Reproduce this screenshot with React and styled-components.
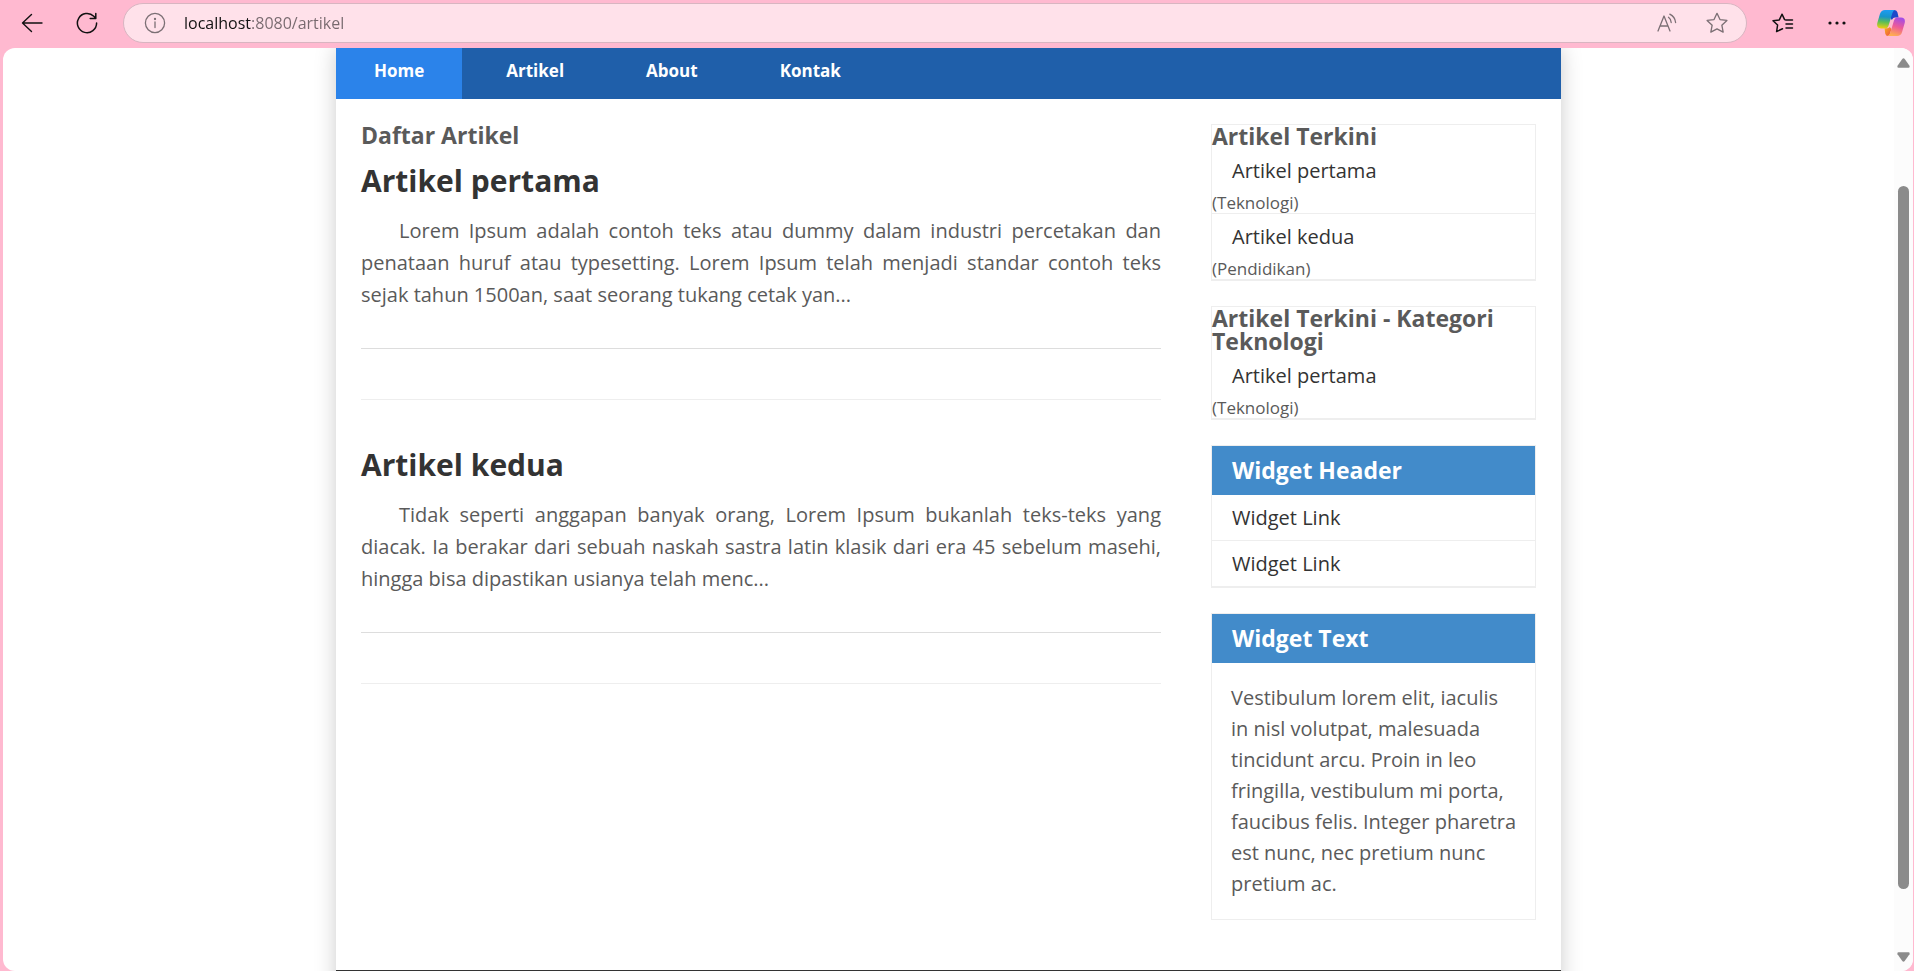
import React from "react";
import styled, { createGlobalStyle } from "styled-components";

const GlobalStyle = createGlobalStyle`
  *, *::before, *::after { box-sizing: border-box; }
  body {
    margin: 0;
    background: #ffb9d0;
    color: #5a5a5a;
    font-family: "Open Sans", sans-serif;
    font-size: 20px;
    line-height: 20px;
    overflow: hidden;
  }
  h1, h2, h3, p, ul { margin: 0; padding: 0; }
  ul { list-style: none; }
  a { color: #333; text-decoration: none; }
`;

const Browser = styled.div`
  display: flex;
  flex-direction: column;
  height: 100vh;
`;

const Toolbar = styled.div`
  flex: none;
  display: flex;
  align-items: center;
  height: 48px;
  padding: 0 7px 2px 16px;
  gap: 20px;
`;

const ToolButton = styled.button`
  display: flex;
  align-items: center;
  justify-content: center;
  width: ${(p) => p.$size || 32}px;
  height: 32px;
  padding: 0;
  border: 0;
  background: none;
  color: ${(p) => (p.$muted ? "#7b6f74" : "#111")};
`;

const AddressBar = styled.div`
  flex: 1;
  display: flex;
  align-items: center;
  gap: 13px;
  height: 40px;
  padding: 0 13px 0 15px;
  border: 1px solid #d8b5c1;
  border-radius: 20px;
  background: #ffe1ea;
`;

const AddressInput = styled.input`
  flex: 1;
  min-width: 0;
  padding: 0;
  border: 0;
  outline: 0;
  font: 16px/24px "Open Sans", sans-serif;
  color: transparent;
  background: linear-gradient(to right, #111 68px, #77696e 68px);
  background-clip: text;
  -webkit-background-clip: text;
`;

const ToolGroup = styled.div`
  display: flex;
  align-items: center;
  gap: ${(p) => p.$gap}px;
`;

const Viewport = styled.div`
  flex: 1;
  min-height: 0;
  display: flex;
  margin: 0 1px 0 3px;
  border-radius: 12px;
  background: #fff;
  overflow: hidden;
`;

const Page = styled.div`
  flex: 1;
  min-width: 0;
  overflow: hidden;
`;

const Container = styled.div`
  max-width: 1225px;
  margin: 0 auto;
  background: #fff;
  box-shadow: 0 0 20px #ccc;
`;

const Nav = styled.nav`
  display: flex;
  gap: 6px;
  background: #1f5faa;
`;

const NavLink = styled.a`
  padding: 8px 38px 13px;
  color: #fff;
  font-size: 17px;
  font-weight: 700;
  line-height: 30px;
  background: ${(p) => (p.$active ? "#2b83ea" : "transparent")};
`;

const Columns = styled.div`
  display: flex;
  align-items: flex-start;
  gap: 50px;
  padding: 25px;
`;

const Main = styled.main`
  flex: 1;
  min-width: 0;
`;

const Sidebar = styled.aside`
  flex: none;
  width: 325px;
`;

const SectionTitle = styled.h3`
  font-size: 23px;
  line-height: 23px;
`;

const Article = styled.article`
  padding: 19px 0 50px;
  border-bottom: 1px solid #eee;
  & + & { padding-top: 50px; }
`;

const ArticleTitle = styled.h2`
  color: #333;
  font-size: 30px;
  line-height: 30px;
`;

const ArticleText = styled.p`
  margin-top: 19px;
  padding-bottom: 37px;
  border-bottom: 1px solid #ddd;
  line-height: 32px;
  text-align: justify;
  text-indent: 38px;
`;

const Widget = styled.section`
  margin-bottom: 25px;
  border: 1px solid #eee;
`;

const WidgetHeader = styled(SectionTitle)`
  padding: 13px 20px;
  color: #fff;
  background: #428bca;
`;

const WidgetItem = styled.li`
  border-bottom: 1px solid #eee;
`;

const WidgetLink = styled.a`
  display: block;
  padding: 13px 20px 12px;
`;

const Category = styled.span`
  display: block;
  font-size: 17px;
`;

const WidgetText = styled.p`
  padding: 19px 16px 20px 19px;
  line-height: 31px;
`;

const Footer = styled.footer`
  height: 50px;
  background: #333;
`;

const Scrollbar = styled.div`
  flex: none;
  display: flex;
  flex-direction: column;
  align-items: center;
  width: 19px;
  padding: 10px 0 9px;
  background: #fcfcfc;
`;

const Thumb = styled.div`
  flex: 703;
  width: 11px;
  border-radius: 6px;
  background: #8b8b8b;
`;

const TrackSpace = styled.div`
  flex: ${(p) => p.$grow};
`;

const STAR = "M10 1.2 L12.7 6.9 L19 7.7 L14.4 12 L15.6 18.3 L10 15.3 L4.4 18.3 L5.6 12 L1 7.7 L7.3 6.9 Z";

const stroke = { fill: "none", stroke: "currentColor", strokeLinecap: "round", strokeLinejoin: "round" };

const BackIcon = () => (
  <svg width="22" height="20" viewBox="0 0 22 20" {...stroke} strokeWidth="1.4">
    <path d="M10.5 1.5 L1.5 10 L10.5 18.5 M1.5 10 H21" />
  </svg>
);

const ReloadIcon = () => (
  <svg width="22" height="22" viewBox="0 0 22 22" {...stroke} strokeWidth="1.5">
    <path d="M20.6 11 A9.6 9.6 0 1 1 17.8 4.3 L19.6 6.1 M19.8 1.4 V6.4 H14.2" />
  </svg>
);

const InfoIcon = () => (
  <svg width="22" height="22" viewBox="0 0 22 22" {...stroke} strokeWidth="1.3">
    <circle cx="11" cy="11" r="9.6" />
    <path d="M11 10 V15.5" />
    <circle cx="11" cy="7" r=".5" fill="currentColor" />
  </svg>
);

const ReadAloudIcon = () => (
  <svg width="22" height="20" viewBox="0 0 22 20" {...stroke} strokeWidth="1.3">
    <path d="M2 18 L8 3 L14 18 M4.2 13 H11.8 M12.5 4.3 Q15 6 15.2 9.5 M13.8 1.2 Q19 3.8 19.6 9.5" />
  </svg>
);

const StarIcon = () => (
  <svg width="22" height="22" viewBox="0 0 20 20" {...stroke} strokeWidth="1.2">
    <path d={STAR} />
  </svg>
);

const FavoritesIcon = () => (
  <svg width="22" height="20" viewBox="0 0 22 20" {...stroke} strokeWidth="1.5">
    <path d="M20.5 7 H14 L12.6 6.6 L10 1.2 L7.3 6.9 L1 7.7 L5.6 12 L4.6 18.6 L10.5 15.8 M14 11 H20.5 M14 15 H20.5" />
  </svg>
);

const MoreIcon = () => (
  <svg width="20" height="6" viewBox="0 0 20 6" fill="currentColor">
    <circle cx="3" cy="3" r="1.6" />
    <circle cx="10" cy="3" r="1.6" />
    <circle cx="17" cy="3" r="1.6" />
  </svg>
);

const CopilotIcon = () => (
  <svg width="28" height="26" viewBox="0 0 28 26">
    <defs>
      <linearGradient id="cpLeft" x1="0.3" y1="0" x2="0.2" y2="1">
        <stop offset="0" stopColor="#1c9bf0" />
        <stop offset="0.35" stopColor="#1794c9" />
        <stop offset="0.65" stopColor="#5fbf53" />
        <stop offset="1" stopColor="#f3cf0c" />
      </linearGradient>
      <linearGradient id="cpRight" x1="0.7" y1="0" x2="0.4" y2="1">
        <stop offset="0" stopColor="#a14be8" />
        <stop offset="0.5" stopColor="#ee5a98" />
        <stop offset="1" stopColor="#ffae50" />
      </linearGradient>
      <linearGradient id="cpBottom" x1="0" y1="0" x2="1" y2="1">
        <stop offset="0" stopColor="#f7b21b" />
        <stop offset="1" stopColor="#ee4b46" />
      </linearGradient>
    </defs>
    <path d="M13 0 H17.5 Q19.8 0 20.5 2.5 L21.6 7.5 H18 Q16 7.5 15.2 9.5 L13.8 9.5 Z" fill="#1b48c9" />
    <path d="M7.6 18.2 H11 Q12 18 12.8 17 L14.4 19 L13.2 23 Q12.4 26 11 26 Q8.8 26 8.2 23.5 Z" fill="url(#cpBottom)" />
    <path d="M8 0 H18 Q16.2 .6 15.4 3 L11.6 15.4 Q10.8 18.4 8 18.4 H4 Q-.8 18.4 .3 13 L3 3.8 Q4.2 0 8 0 Z" fill="url(#cpLeft)" />
    <path d="M20 26 H10.5 Q12.4 25.4 13.2 23 L17 10.6 Q18 7.6 20.5 7.6 H24 Q28.8 7.6 27.7 13 L25 22.2 Q23.8 26 20 26 Z" fill="url(#cpRight)" />
  </svg>
);

const ArrowUp = () => (
  <svg width="13" height="10" viewBox="0 0 13 10" fill="#8b8b8b">
    <path d="M5.3 1 Q6.5 -.4 7.7 1 L12.5 7.8 Q13 9.8 11.5 9.8 H1.5 Q0 9.8 .5 7.8 Z" />
  </svg>
);

const ArrowDown = () => (
  <svg width="13" height="10" viewBox="0 0 13 10" fill="#8b8b8b">
    <path d="M5.3 9 Q6.5 10.4 7.7 9 L12.5 2.2 Q13 .2 11.5 .2 H1.5 Q0 .2 .5 2.2 Z" />
  </svg>
);

const NAV = ["Home", "Artikel", "About", "Kontak"];

const ARTICLES = [
  {
    title: "Artikel pertama",
    text: "Lorem Ipsum adalah contoh teks atau dummy dalam industri percetakan dan penataan huruf atau typesetting. Lorem Ipsum telah menjadi standar contoh teks sejak tahun 1500an, saat seorang tukang cetak yan...",
  },
  {
    title: "Artikel kedua",
    text: "Tidak seperti anggapan banyak orang, Lorem Ipsum bukanlah teks-teks yang diacak. Ia berakar dari sebuah naskah sastra latin klasik dari era 45 sebelum masehi, hingga bisa dipastikan usianya telah menc...",
  },
];

const RECENT = [
  {
    title: "Artikel Terkini",
    items: [
      ["Artikel pertama", "Teknologi"],
      ["Artikel kedua", "Pendidikan"],
    ],
  },
  {
    title: "Artikel Terkini - Kategori Teknologi",
    items: [["Artikel pertama", "Teknologi"]],
  },
];

export default function App() {
  return (
    <Browser>
      <GlobalStyle />
      <Toolbar>
        <ToolGroup $gap={23}>
          <ToolButton aria-label="Back"><BackIcon /></ToolButton>
          <ToolButton aria-label="Reload"><ReloadIcon /></ToolButton>
        </ToolGroup>
        <AddressBar>
          <ToolButton aria-label="Site information" $muted><InfoIcon /></ToolButton>
          <AddressInput aria-label="Address" defaultValue="localhost:8080/artikel" />
          <ToolGroup $gap={20}>
            <ToolButton aria-label="Read aloud" $size={28} $muted><ReadAloudIcon /></ToolButton>
            <ToolButton aria-label="Add to favorites" $muted><StarIcon /></ToolButton>
          </ToolGroup>
        </AddressBar>
        <ToolGroup $gap={22}>
          <ToolButton aria-label="Favorites"><FavoritesIcon /></ToolButton>
          <ToolButton aria-label="Settings and more"><MoreIcon /></ToolButton>
          <ToolButton aria-label="Copilot"><CopilotIcon /></ToolButton>
        </ToolGroup>
      </Toolbar>
      <Viewport>
        <Page>
          <Container>
            <Nav>
              {NAV.map((label, i) => (
                <NavLink key={label} href="#" $active={i === 0}>{label}</NavLink>
              ))}
            </Nav>
            <Columns>
              <Main>
                <SectionTitle>Daftar Artikel</SectionTitle>
                {ARTICLES.map((a) => (
                  <Article key={a.title}>
                    <ArticleTitle><a href="#">{a.title}</a></ArticleTitle>
                    <ArticleText>{a.text}</ArticleText>
                  </Article>
                ))}
              </Main>
              <Sidebar>
                {RECENT.map((w) => (
                  <Widget key={w.title}>
                    <SectionTitle>{w.title}</SectionTitle>
                    <ul>
                      {w.items.map(([title, category]) => (
                        <WidgetItem key={title}>
                          <WidgetLink href="#">{title}</WidgetLink>
                          <Category>({category})</Category>
                        </WidgetItem>
                      ))}
                    </ul>
                  </Widget>
                ))}
                <Widget>
                  <WidgetHeader>Widget Header</WidgetHeader>
                  <ul>
                    <WidgetItem><WidgetLink href="#">Widget Link</WidgetLink></WidgetItem>
                    <WidgetItem><WidgetLink href="#">Widget Link</WidgetLink></WidgetItem>
                  </ul>
                </Widget>
                <Widget>
                  <WidgetHeader>Widget Text</WidgetHeader>
                  <WidgetText>
                    Vestibulum lorem elit, iaculis in nisl volutpat, malesuada tincidunt arcu. Proin in leo
                    fringilla, vestibulum mi porta, faucibus felis. Integer pharetra est nunc, nec pretium
                    nunc pretium ac.
                  </WidgetText>
                </Widget>
              </Sidebar>
            </Columns>
            <Footer />
          </Container>
        </Page>
        <Scrollbar>
          <ArrowUp />
          <TrackSpace $grow={118} />
          <Thumb />
          <TrackSpace $grow={63} />
          <ArrowDown />
        </Scrollbar>
      </Viewport>
    </Browser>
  );
}
